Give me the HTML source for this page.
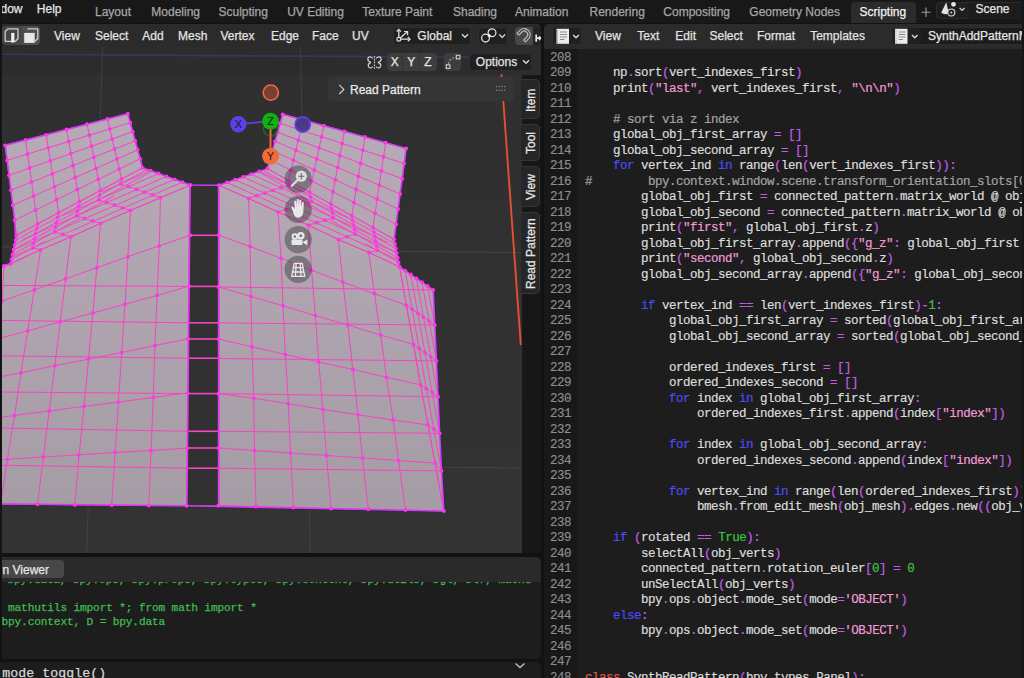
<!DOCTYPE html>
<html><head><meta charset="utf-8">
<style>
*{margin:0;padding:0;box-sizing:border-box}
html,body{width:1024px;height:678px;overflow:hidden;background:#121212;font-family:"Liberation Sans",sans-serif;font-size:12px}
.a{position:absolute;white-space:pre;line-height:12px;-webkit-text-stroke:0.25px currentColor}
.p{position:absolute}
#top{position:absolute;left:0;top:0;width:1024px;height:22.5px;background:#181818}
.tab{color:#a6a6a6}
.menu{color:#e6e6e6}
.hm{position:absolute;white-space:pre;line-height:12px;color:#e3e3e3;top:29.5px;-webkit-text-stroke:0.25px currentColor}
#vp{position:absolute;left:0;top:23.5px;width:541px;height:529.5px;background:linear-gradient(#2f2f2f,#333333);border-radius:0 5px 5px 0;overflow:hidden}
.btn{position:absolute;background:#3f3f3f;border-radius:4px}
.dd{position:absolute;background:#202020;border-radius:4px;border:1px solid #2e2e2e}
.stab{position:absolute;left:521px;width:19px;background:#262626;border-radius:0 5px 5px 0;border:1px solid #363636;border-left:none}
.vt{position:absolute;color:#e6e6e6;transform:rotate(-90deg);transform-origin:0 0;white-space:pre;line-height:12px;-webkit-text-stroke:0.25px currentColor}
#te{position:absolute;left:544px;top:23.5px;width:480px;height:655px;background:#1d1d1d;border-radius:5px 5px 0 0;overflow:hidden}
#teh{position:absolute;left:0;top:0;width:478px;height:25px;background:#2b2b2b}
#gut{position:absolute;left:0;top:25px;width:33.6px;height:630px;background:#181818}
.ln{position:absolute;left:0;width:27px;text-align:right;font-family:"Liberation Mono",monospace;font-size:12.5px;letter-spacing:-0.5px;line-height:15.5px;color:#8e8e8e;white-space:pre;-webkit-text-stroke:0.15px currentColor}
.cl{position:absolute;left:41px;font-family:"Liberation Mono",monospace;font-size:12.5px;letter-spacing:-0.5px;line-height:15.5px;color:#dcdcdc;white-space:pre;-webkit-text-stroke:0.2px currentColor}
#con{position:absolute;left:0;top:557px;width:541px;height:102px;background:#1d1d1d;border-radius:0 5px 5px 0;overflow:hidden}
.cg{position:absolute;font-family:"Liberation Mono",monospace;font-size:11.2px;letter-spacing:-0.17px;line-height:14px;color:#3fbd52;white-space:pre;-webkit-text-stroke:0.25px currentColor}
#info{position:absolute;left:0;top:662px;width:541px;height:16px;background:#1d1d1d;border-radius:0 5px 0 0;overflow:hidden}
</style></head><body>
<div id="top">
  <div class="a menu" style="left:0.5px;top:3.1px">dow</div>
  <div class="a menu" style="left:36.8px;top:3.1px">Help</div>
  <div class="a tab" style="left:95px;top:5.7px">Layout</div>
  <div class="a tab" style="left:151.3px;top:5.7px">Modeling</div>
  <div class="a tab" style="left:218.5px;top:5.7px">Sculpting</div>
  <div class="a tab" style="left:287.2px;top:5.7px">UV Editing</div>
  <div class="a tab" style="left:362.3px;top:5.7px">Texture Paint</div>
  <div class="a tab" style="left:453px;top:5.7px">Shading</div>
  <div class="a tab" style="left:515px;top:5.7px">Animation</div>
  <div class="a tab" style="left:589.5px;top:5.7px">Rendering</div>
  <div class="a tab" style="left:663.3px;top:5.7px">Compositing</div>
  <div class="a tab" style="left:749.3px;top:5.7px">Geometry Nodes</div>
  <div class="p" style="left:851px;top:2px;width:65px;height:20.5px;background:#2b2b2b;border-radius:4px 4px 0 0"></div>
  <div class="a" style="left:859.5px;top:5.7px;color:#f2f2f2">Scripting</div>
  <svg class="p" style="left:920px;top:6px" width="12" height="12"><path d="M6 1.5V11M1.5 6.3H10.5" stroke="#a0a0a0" stroke-width="1.1"/></svg>
  <div class="p" style="left:936.4px;top:2px;width:90px;height:17px;background:#1f1f1f;border-radius:4px;border:1px solid #2c2c2c"></div>
  <div class="p" style="left:968.5px;top:3px;width:56px;height:15.5px;background:#1c1c1c"></div>
  <div class="a menu" style="left:975.5px;top:3px">Scene</div>
  <svg class="p" style="left:936px;top:0px" width="32" height="20">
    <path d="M10.3 2.3 L5.2 12.6 C7 14.3 10 14.6 12.8 13.6 Z" fill="#e2e2e2"/>
    <circle cx="17.5" cy="4.3" r="2.4" fill="#e8e8e8"/>
    <circle cx="15.3" cy="12.5" r="3.5" fill="#222" stroke="#d6d6d6" stroke-width="1.2"/>
    <circle cx="15.3" cy="12.5" r="1" fill="#cfcfcf"/>
    <path d="M23.6 7.9 L26.1 10.4 L28.6 7.9" fill="none" stroke="#d8d8d8" stroke-width="1.3"/>
  </svg>
</div>

<div id="vp"></div>
<svg class="p" width="541" height="553" viewBox="0 0 541 553" style="left:0;top:0">
<defs><linearGradient id="fg" x1="0" y1="0" x2="0" y2="1"><stop offset="0" stop-color="#b6abb6"/><stop offset="1" stop-color="#a69ca6"/></linearGradient><clipPath id="vc"><rect x="2" y="47" width="521" height="506"/></clipPath></defs>
<g clip-path="url(#vc)">
<line x1="102.6" y1="47" x2="86.7" y2="553" stroke="#434343" stroke-width="1"/>
<line x1="300.5" y1="47" x2="310.3" y2="553" stroke="#434343" stroke-width="1"/>
<line x1="0" y1="246.8" x2="521" y2="252.6" stroke="#434343" stroke-width="1"/>
<line x1="0" y1="463" x2="521" y2="468" stroke="#434343" stroke-width="1"/>
<line x1="0" y1="54.3" x2="541" y2="57.6" stroke="#44366c" stroke-width="1.6"/>
<line x1="501.4" y1="74.3" x2="520.8" y2="345" stroke="#e4502f" stroke-width="1.9"/>
<polygon points="5.2,145.3 127.9,113.7 130.3,122.7 132.8,131.7 135.2,140.8 137.7,149.8 140.2,158.8 142.6,167.8 150.6,170.7 158.5,173.5 166.5,176.4 174.5,179.3 182.4,182.1 190.4,185.0 218.9,185.2 218.9,185.2 227.0,182.4 235.0,179.7 243.1,176.9 251.2,174.1 259.2,171.4 267.3,168.6 269.9,159.6 272.4,150.5 275.0,141.4 277.6,132.4 280.1,123.3 282.7,114.3 406.2,148.4 404.2,163.6 402.2,178.7 400.1,193.9 398.1,209.0 396.1,224.2 394.1,239.3 395.0,243.9 395.9,248.5 396.8,253.1 397.7,257.7 398.6,262.3 399.5,266.9 405.2,270.6 410.8,274.5 416.4,278.4 422.0,282.2 427.6,286.0 433.2,289.9 434.8,325.0 436.5,360.9 438.1,396.7 439.7,433.3 441.5,470.9 443.9,511.1 186.5,505.8 0.5,504.0 -2.0,504.0 -2.0,266.0 10.6,264.0 11.6,259.2 12.6,254.4 13.6,249.6 14.6,244.8 15.6,240.0 14.7,220.2 12.8,205.2 10.9,190.2 9.0,175.3 7.1,160.3" fill="#2a2a5a" stroke="#2a2a5a" stroke-width="2.6" stroke-linejoin="round"/>
<polygon points="5.2,145.3 127.9,113.7 130.3,122.7 132.8,131.7 135.2,140.8 137.7,149.8 140.2,158.8 142.6,167.8 150.6,170.7 158.5,173.5 166.5,176.4 174.5,179.3 182.4,182.1 190.4,185.0 218.9,185.2 218.9,185.2 227.0,182.4 235.0,179.7 243.1,176.9 251.2,174.1 259.2,171.4 267.3,168.6 269.9,159.6 272.4,150.5 275.0,141.4 277.6,132.4 280.1,123.3 282.7,114.3 406.2,148.4 404.2,163.6 402.2,178.7 400.1,193.9 398.1,209.0 396.1,224.2 394.1,239.3 395.0,243.9 395.9,248.5 396.8,253.1 397.7,257.7 398.6,262.3 399.5,266.9 405.2,270.6 410.8,274.5 416.4,278.4 422.0,282.2 427.6,286.0 433.2,289.9 434.8,325.0 436.5,360.9 438.1,396.7 439.7,433.3 441.5,470.9 443.9,511.1 186.5,505.8 0.5,504.0 -2.0,504.0 -2.0,266.0 10.6,264.0 11.6,259.2 12.6,254.4 13.6,249.6 14.6,244.8 15.6,240.0 14.7,220.2 12.8,205.2 10.9,190.2 9.0,175.3 7.1,160.3" fill="url(#fg)"/>
<polygon points="190.5,185 218.5,185.2 218.5,505.5 186.5,505.8" fill="#313131"/>
<line x1="189" y1="235.3" x2="219" y2="235.3" stroke="#f644c2" stroke-width="1.6"/>
<line x1="189" y1="286.4" x2="219" y2="286.4" stroke="#f644c2" stroke-width="1.6"/>
<line x1="189" y1="322.8" x2="219" y2="322.8" stroke="#f644c2" stroke-width="1.6"/>
<line x1="189" y1="339" x2="219" y2="339" stroke="#f644c2" stroke-width="1.6"/>
<line x1="189" y1="358.2" x2="219" y2="358.2" stroke="#f644c2" stroke-width="1.6"/>
<line x1="189" y1="393.6" x2="219" y2="393.6" stroke="#f644c2" stroke-width="1.6"/>
<line x1="189" y1="431.3" x2="219" y2="431.3" stroke="#f644c2" stroke-width="1.6"/>
<line x1="189" y1="448" x2="219" y2="448" stroke="#f644c2" stroke-width="1.6"/>
<line x1="189" y1="468.2" x2="219" y2="468.2" stroke="#f644c2" stroke-width="1.6"/>
<g fill="none" stroke="#f644c2" stroke-width="1" stroke-linejoin="round">
<polyline points="5.2,145.3 25.6,140.0 46.1,134.8 66.5,129.5 87.0,124.2 107.5,119.0 127.9,113.7"/>
<polyline points="7.1,160.3 27.6,154.0 48.2,147.8 68.7,141.5 89.3,135.2 109.8,129.0 130.3,122.7"/>
<polyline points="9.0,175.3 29.6,168.0 50.3,160.8 70.9,153.5 91.5,146.2 112.2,139.0 132.8,131.7"/>
<polyline points="10.9,190.2 31.6,182.0 52.4,173.8 73.1,165.5 93.8,157.2 114.5,149.0 135.2,140.8"/>
<polyline points="12.8,205.2 33.6,196.0 54.4,186.7 75.2,177.5 96.1,168.3 116.9,159.0 137.7,149.8"/>
<polyline points="14.7,220.2 35.6,210.0 56.5,199.7 77.4,189.5 98.3,179.3 119.2,169.0 140.2,158.8"/>
<polyline points="16.6,235.2 37.6,224.0 58.6,212.7 79.6,201.5 100.6,190.3 121.6,179.0 142.6,167.8"/>
<polyline points="5.2,145.3 7.1,160.3 9.0,175.3 10.9,190.2 12.8,205.2 14.7,220.2 16.6,235.2"/>
<polyline points="25.6,140.0 27.6,154.0 29.6,168.0 31.6,182.0 33.6,196.0 35.6,210.0 37.6,224.0"/>
<polyline points="46.1,134.8 48.2,147.8 50.3,160.8 52.4,173.8 54.4,186.7 56.5,199.7 58.6,212.7"/>
<polyline points="66.5,129.5 68.7,141.5 70.9,153.5 73.1,165.5 75.2,177.5 77.4,189.5 79.6,201.5"/>
<polyline points="87.0,124.2 89.3,135.2 91.5,146.2 93.8,157.2 96.1,168.3 98.3,179.3 100.6,190.3"/>
<polyline points="107.5,119.0 109.8,129.0 112.2,139.0 114.5,149.0 116.9,159.0 119.2,169.0 121.6,179.0"/>
<polyline points="127.9,113.7 130.3,122.7 132.8,131.7 135.2,140.8 137.7,149.8 140.2,158.8 142.6,167.8"/>
<polyline points="282.7,114.3 303.3,120.0 323.9,125.7 344.4,131.3 365.0,137.0 385.6,142.7 406.2,148.4"/>
<polyline points="280.1,123.3 300.8,130.1 321.5,136.8 342.2,143.4 362.8,150.2 383.5,156.8 404.2,163.6"/>
<polyline points="277.6,132.4 298.3,140.1 319.1,147.8 339.9,155.5 360.6,163.3 381.4,171.0 402.2,178.7"/>
<polyline points="275.0,141.4 295.9,150.2 316.7,158.9 337.6,167.6 358.4,176.4 379.3,185.1 400.1,193.9"/>
<polyline points="272.4,150.5 293.4,160.2 314.3,170.0 335.3,179.8 356.2,189.5 377.2,199.2 398.1,209.0"/>
<polyline points="269.9,159.6 290.9,170.3 311.9,181.1 333.0,191.8 354.0,202.6 375.1,213.4 396.1,224.2"/>
<polyline points="267.3,168.6 288.4,180.4 309.6,192.2 330.7,203.9 351.8,215.7 373.0,227.5 394.1,239.3"/>
<polyline points="282.7,114.3 280.1,123.3 277.6,132.4 275.0,141.4 272.4,150.5 269.9,159.6 267.3,168.6"/>
<polyline points="303.3,120.0 300.8,130.1 298.3,140.1 295.9,150.2 293.4,160.2 290.9,170.3 288.4,180.4"/>
<polyline points="323.9,125.7 321.5,136.8 319.1,147.8 316.7,158.9 314.3,170.0 311.9,181.1 309.6,192.2"/>
<polyline points="344.4,131.3 342.2,143.4 339.9,155.5 337.6,167.6 335.3,179.8 333.0,191.8 330.7,203.9"/>
<polyline points="365.0,137.0 362.8,150.2 360.6,163.3 358.4,176.4 356.2,189.5 354.0,202.6 351.8,215.7"/>
<polyline points="385.6,142.7 383.5,156.8 381.4,171.0 379.3,185.1 377.2,199.2 375.1,213.4 373.0,227.5"/>
<polyline points="406.2,148.4 404.2,163.6 402.2,178.7 400.1,193.9 398.1,209.0 396.1,224.2 394.1,239.3"/>
<polyline points="16.6,235.2 15.6,240.0 14.6,244.8 13.6,249.6 12.6,254.4 11.6,259.2 10.6,264.0"/>
<polyline points="37.6,224.0 36.6,228.8 35.6,233.6 34.6,238.4 33.6,243.2 32.6,248.0 40.6,249.8"/>
<polyline points="58.6,212.7 57.6,217.5 56.6,222.3 55.6,227.1 54.6,231.9 62.8,234.4 70.9,236.8"/>
<polyline points="79.6,201.5 78.6,206.3 77.6,211.1 76.6,215.9 84.6,218.4 92.6,221.0 100.6,223.5"/>
<polyline points="100.6,190.3 99.6,195.1 98.6,199.9 106.6,202.5 114.5,205.1 122.5,207.8 130.5,210.4"/>
<polyline points="121.6,179.0 120.6,183.8 128.6,186.6 136.6,189.4 144.5,192.2 152.5,194.9 160.5,197.7"/>
<polyline points="142.6,167.8 150.6,170.7 158.5,173.5 166.5,176.4 174.5,179.3 182.4,182.1 190.4,185.0"/>
<polyline points="267.3,168.6 259.2,171.4 251.2,174.1 243.1,176.9 235.0,179.7 227.0,182.4 218.9,185.2"/>
<polyline points="288.4,180.4 289.3,185.0 281.2,187.7 273.0,190.3 264.9,193.0 256.7,195.7 248.6,198.4"/>
<polyline points="309.6,192.2 310.5,196.8 311.4,201.4 303.1,204.0 294.7,206.7 286.4,209.4 278.1,212.1"/>
<polyline points="330.7,203.9 331.6,208.5 332.5,213.1 333.4,217.8 325.1,220.2 316.7,222.7 308.4,225.2"/>
<polyline points="351.8,215.7 352.7,220.3 353.6,224.9 354.5,229.5 355.4,234.1 346.9,236.8 338.4,239.5"/>
<polyline points="373.0,227.5 373.9,232.1 374.8,236.7 375.7,241.3 376.6,245.9 377.5,250.5 368.9,252.5"/>
<polyline points="394.1,239.3 395.0,243.9 395.9,248.5 396.8,253.1 397.7,257.7 398.6,262.3 399.5,266.9"/>
<polyline points="16.6,235.2 37.6,224.0 58.6,212.7 79.6,201.5 100.6,190.3 121.6,179.0 142.6,167.8"/>
<polyline points="10.6,264.0 40.6,249.8 70.9,236.8 100.6,223.5 130.5,210.4 160.5,197.7 190.4,185.0"/>
<polyline points="267.3,168.6 288.4,180.4 309.6,192.2 330.7,203.9 351.8,215.7 373.0,227.5 394.1,239.3"/>
<polyline points="218.9,185.2 248.6,198.4 278.1,212.1 308.4,225.2 338.4,239.5 368.9,252.5 399.5,266.9"/>
<polyline points="190.4,185.0 160.5,197.7 130.5,210.4 100.6,223.5 70.9,236.8 40.6,249.8 3.9,266.4"/>
<polyline points="190.4,235.2 159.2,245.9 127.9,256.6 96.9,267.7 65.7,278.8 34.3,289.8 2.2,300.9"/>
<polyline points="189.2,286.1 157.1,295.4 125.0,304.2 92.9,313.0 60.2,321.9 27.7,330.8 -5.0,339.5"/>
<polyline points="188.0,338.9 154.9,345.6 121.7,352.4 88.5,359.1 54.9,365.7 21.0,372.8 -12.0,379.0"/>
<polyline points="187.5,392.9 153.3,397.4 118.4,402.1 84.0,406.4 49.2,410.9 14.6,415.4 -20.0,420.0"/>
<polyline points="187.1,448.2 151.0,450.5 115.2,452.5 79.1,454.8 43.4,457.0 7.4,459.3 -28.0,461.5"/>
<polyline points="186.5,505.8 148.8,505.6 111.7,505.2 74.8,504.8 37.5,504.3 0.5,504.0 -36.0,504.0"/>
<polyline points="160.5,197.7 159.2,245.9 157.1,295.4 154.9,345.6 153.3,397.4 151.0,450.5 148.8,505.6"/>
<polyline points="130.5,210.4 127.9,256.6 125.0,304.2 121.7,352.4 118.4,402.1 115.2,452.5 111.7,505.2"/>
<polyline points="100.6,223.5 96.9,267.7 92.9,313.0 88.5,359.1 84.0,406.4 79.1,454.8 74.8,504.8"/>
<polyline points="70.9,236.8 65.7,278.8 60.2,321.9 54.9,365.7 49.2,410.9 43.4,457.0 37.5,504.3"/>
<polyline points="40.6,249.8 34.3,289.8 27.7,330.8 21.0,372.8 14.6,415.4 7.4,459.3 0.5,504.0"/>
<polyline points="3.9,266.4 2.2,300.9 -5.0,339.5 -12.0,379.0 -20.0,420.0 -28.0,461.5 -36.0,504.0"/>
<polyline points="218.9,185.2 248.6,198.4 278.1,212.1 308.4,225.2 338.4,239.5 368.9,252.5 399.6,266.8"/>
<polyline points="218.8,235.2 250.1,246.5 281.0,258.3 311.6,270.3 342.9,282.1 374.4,293.6 406.4,305.3"/>
<polyline points="218.5,287.0 250.9,296.4 283.0,305.8 315.3,315.6 347.9,325.0 380.7,335.1 413.5,344.4"/>
<polyline points="218.5,339.1 252.0,346.8 285.3,354.5 318.8,362.0 352.8,369.5 386.5,377.3 420.6,384.8"/>
<polyline points="218.5,393.7 253.7,398.3 288.4,403.7 322.8,409.4 358.0,414.8 393.1,419.9 428.0,425.0"/>
<polyline points="218.5,448.0 254.5,450.5 290.5,453.0 326.5,455.5 362.5,458.0 398.5,460.5 435.0,463.0"/>
<polyline points="218.5,505.5 256.0,506.5 293.5,507.5 331.0,508.5 368.3,509.2 405.5,510.0 443.9,511.1"/>
<polyline points="248.6,198.4 250.1,246.5 250.9,296.4 252.0,346.8 253.7,398.3 254.5,450.5 256.0,506.5"/>
<polyline points="278.1,212.1 281.0,258.3 283.0,305.8 285.3,354.5 288.4,403.7 290.5,453.0 293.5,507.5"/>
<polyline points="308.4,225.2 311.6,270.3 315.3,315.6 318.8,362.0 322.8,409.4 326.5,455.5 331.0,508.5"/>
<polyline points="338.4,239.5 342.9,282.1 347.9,325.0 352.8,369.5 358.0,414.8 362.5,458.0 368.3,509.2"/>
<polyline points="368.9,252.5 374.4,293.6 380.7,335.1 386.5,377.3 393.1,419.9 398.5,460.5 405.5,510.0"/>
<polyline points="399.6,266.8 406.4,305.3 413.5,344.4 420.6,384.8 428.0,425.0 435.0,463.0 443.9,511.1"/>
<polyline points="399.6,266.8 405.2,270.6 410.8,274.5 416.4,278.4 422.0,282.2 427.6,286.0 433.2,289.9"/>
<polyline points="406.4,305.3 412.1,309.2 417.8,313.2 423.4,317.1 429.1,321.1 434.8,325.0"/>
<polyline points="413.5,344.4 419.2,348.5 425.0,352.6 430.8,356.8 436.5,360.9"/>
<polyline points="420.6,384.8 426.4,388.8 432.3,392.7 438.1,396.7"/>
<polyline points="428.0,425.0 433.9,429.1 439.7,433.3"/>
<polyline points="435.0,463.0 441.5,470.9"/>
<polyline points="399.6,266.8 406.4,305.3 413.5,344.4 420.6,384.8 428.0,425.0 435.0,463.0 443.9,511.1"/>
<polyline points="405.2,270.6 412.1,309.2 419.2,348.5 426.4,388.8 433.9,429.1 441.5,470.9"/>
<polyline points="410.8,274.5 417.8,313.2 425.0,352.6 432.3,392.7 439.7,433.3"/>
<polyline points="416.4,278.4 423.4,317.1 430.8,356.8 438.1,396.7"/>
<polyline points="422.0,282.2 429.1,321.1 436.5,360.9"/>
<polyline points="427.6,286.0 434.8,325.0"/>
<polyline points="433.2,289.9"/>
<polyline points="190.0,286.4 -2.0,285.4"/>
<polyline points="190.0,322.8 -2.0,320.4"/>
<polyline points="190.0,358.2 -2.0,355.8"/>
<polyline points="190.0,393.6 -2.0,392.0"/>
<polyline points="190.0,431.3 -2.0,428.0"/>
<polyline points="190.0,468.2 -2.0,465.2"/>
<polyline points="218.5,287.0 433.2,289.9"/>
<polyline points="218.5,322.9 434.8,325.0"/>
<polyline points="218.5,358.5 436.5,360.9"/>
<polyline points="218.5,393.7 438.1,396.7"/>
<polyline points="218.5,431.3 439.7,433.3"/>
<polyline points="218.5,468.2 441.5,470.9"/>
</g>
<clipPath id="lfc"><polygon points="16.6,235.2 37.6,224.0 58.6,212.7 79.6,201.5 100.6,190.3 121.6,179.0 142.6,167.8 150.6,170.7 158.5,173.5 166.5,176.4 174.5,179.3 182.4,182.1 190.4,185.0 190.4,185.0 160.5,197.7 130.5,210.4 100.6,223.5 70.9,236.8 40.6,249.8 10.6,264.0 11.6,259.2 12.6,254.4 13.6,249.6 14.6,244.8 15.6,240.0"/></clipPath><clipPath id="rfc"><polygon points="267.3,168.6 288.4,180.4 309.6,192.2 330.7,203.9 351.8,215.7 373.0,227.5 394.1,239.3 395.0,243.9 395.9,248.5 396.8,253.1 397.7,257.7 398.6,262.3 399.5,266.9 399.5,266.9 368.9,252.5 338.4,239.5 308.4,225.2 278.1,212.1 248.6,198.4 218.9,185.2 227.0,182.4 235.0,179.7 243.1,176.9 251.2,174.1 259.2,171.4"/></clipPath>
<g fill="none" stroke="#f644c2" stroke-width="1" clip-path="url(#lfc)">
<polyline points="-47.4,273.7 183.6,150.1"/>
<polyline points="102.6,191.7 168.5,162.8"/>
<polyline points="-35.8,271.8 149.0,172.9"/>
<polyline points="62.6,215.7 194.5,157.7"/>
<polyline points="-24.2,269.8 114.4,195.7"/>
<polyline points="22.7,239.6 220.4,152.7"/>
<polyline points="-12.6,267.9 79.8,218.5"/>
<polyline points="-17.3,263.5 246.4,147.7"/>
<polyline points="-1.0,265.9 45.2,241.2"/>
<polyline points="-57.3,287.5 272.3,142.6"/>
</g>
<g fill="none" stroke="#f644c2" stroke-width="1" clip-path="url(#rfc)">
<polyline points="225.9,149.6 458.4,279.2"/>
<polyline points="241.2,163.2 307.4,193.2"/>
<polyline points="260.6,173.1 446.6,276.8"/>
<polyline points="215.0,157.8 347.5,217.7"/>
<polyline points="295.4,196.5 434.8,274.3"/>
<polyline points="188.9,152.4 387.6,242.3"/>
<polyline points="330.1,220.0 423.1,271.8"/>
<polyline points="162.8,147.0 427.7,266.8"/>
<polyline points="364.8,243.4 411.3,269.4"/>
<polyline points="136.7,141.6 467.8,291.4"/>
</g>
<polygon points="5.2,145.3 127.9,113.7 130.3,122.7 132.8,131.7 135.2,140.8 137.7,149.8 140.2,158.8 142.6,167.8 150.6,170.7 158.5,173.5 166.5,176.4 174.5,179.3 182.4,182.1 190.4,185.0 218.9,185.2 218.9,185.2 227.0,182.4 235.0,179.7 243.1,176.9 251.2,174.1 259.2,171.4 267.3,168.6 269.9,159.6 272.4,150.5 275.0,141.4 277.6,132.4 280.1,123.3 282.7,114.3 406.2,148.4 404.2,163.6 402.2,178.7 400.1,193.9 398.1,209.0 396.1,224.2 394.1,239.3 395.0,243.9 395.9,248.5 396.8,253.1 397.7,257.7 398.6,262.3 399.5,266.9 405.2,270.6 410.8,274.5 416.4,278.4 422.0,282.2 427.6,286.0 433.2,289.9 434.8,325.0 436.5,360.9 438.1,396.7 439.7,433.3 441.5,470.9 443.9,511.1 186.5,505.8 0.5,504.0 -2.0,504.0 -2.0,266.0 10.6,264.0 11.6,259.2 12.6,254.4 13.6,249.6 14.6,244.8 15.6,240.0 14.7,220.2 12.8,205.2 10.9,190.2 9.0,175.3 7.1,160.3" fill="none" stroke="#d838f0" stroke-width="1.5" stroke-linejoin="round"/>
<line x1="190" y1="185" x2="186.8" y2="505.8" stroke="#e038e8" stroke-width="1.8"/>
<line x1="218.7" y1="185" x2="218.7" y2="505.5" stroke="#e038e8" stroke-width="1.8"/>
<g fill="#ff36ea">
<circle cx="413.5" cy="344.4" r="1.9"/>
<circle cx="32.6" cy="248.0" r="1.9"/>
<circle cx="35.6" cy="210.0" r="1.9"/>
<circle cx="128.6" cy="186.6" r="1.9"/>
<circle cx="79.1" cy="454.8" r="1.9"/>
<circle cx="281" cy="258.3" r="1.9"/>
<circle cx="356.2" cy="189.5" r="1.9"/>
<circle cx="250.9" cy="296.4" r="1.9"/>
<circle cx="398.6" cy="262.3" r="1.9"/>
<circle cx="157.1" cy="295.4" r="1.9"/>
<circle cx="405.2" cy="270.6" r="1.9"/>
<circle cx="27.7" cy="330.8" r="1.9"/>
<circle cx="66.5" cy="129.5" r="1.9"/>
<circle cx="397.7" cy="257.7" r="1.9"/>
<circle cx="398.1" cy="209.0" r="1.9"/>
<circle cx="-28" cy="461.5" r="1.9"/>
<circle cx="315.3" cy="315.6" r="1.9"/>
<circle cx="218.5" cy="339.1" r="1.9"/>
<circle cx="0.5" cy="504" r="1.9"/>
<circle cx="420.6" cy="384.8" r="1.9"/>
<circle cx="323.9" cy="125.7" r="1.9"/>
<circle cx="11.6" cy="259.2" r="1.9"/>
<circle cx="15.6" cy="240.0" r="1.9"/>
<circle cx="218.9" cy="185.2" r="1.9"/>
<circle cx="58.6" cy="212.7" r="1.9"/>
<circle cx="253.7" cy="398.3" r="1.9"/>
<circle cx="13.6" cy="249.6" r="1.9"/>
<circle cx="33.6" cy="196.0" r="1.9"/>
<circle cx="400.1" cy="193.9" r="1.9"/>
<circle cx="309.6" cy="192.2" r="1.9"/>
<circle cx="316.7" cy="222.7" r="1.9"/>
<circle cx="87.0" cy="124.2" r="1.9"/>
<circle cx="55.6" cy="227.1" r="1.9"/>
<circle cx="40.6" cy="249.8" r="1.9"/>
<circle cx="254.5" cy="450.5" r="1.9"/>
<circle cx="423.4" cy="317.1" r="1.9"/>
<circle cx="375.7" cy="241.3" r="1.9"/>
<circle cx="429.1" cy="321.1" r="1.9"/>
<circle cx="5.2" cy="145.3" r="1.9"/>
<circle cx="289.3" cy="185.0" r="1.9"/>
<circle cx="412.1" cy="309.2" r="1.9"/>
<circle cx="151" cy="450.5" r="1.9"/>
<circle cx="49.2" cy="410.9" r="1.9"/>
<circle cx="374.4" cy="293.6" r="1.9"/>
<circle cx="417.8" cy="313.2" r="1.9"/>
<circle cx="35.6" cy="233.6" r="1.9"/>
<circle cx="373.0" cy="227.5" r="1.9"/>
<circle cx="344.4" cy="131.3" r="1.9"/>
<circle cx="10.6" cy="264.0" r="1.9"/>
<circle cx="286.4" cy="209.4" r="1.9"/>
<circle cx="398.5" cy="460.5" r="1.9"/>
<circle cx="153.3" cy="397.4" r="1.9"/>
<circle cx="399.5" cy="266.9" r="1.9"/>
<circle cx="331" cy="508.5" r="1.9"/>
<circle cx="12.6" cy="254.4" r="1.9"/>
<circle cx="125" cy="304.2" r="1.9"/>
<circle cx="16.6" cy="235.2" r="1.9"/>
<circle cx="362.5" cy="458" r="1.9"/>
<circle cx="120.6" cy="183.8" r="1.9"/>
<circle cx="7.4" cy="459.3" r="1.9"/>
<circle cx="48.2" cy="147.8" r="1.9"/>
<circle cx="119.2" cy="169.0" r="1.9"/>
<circle cx="136.6" cy="189.4" r="1.9"/>
<circle cx="277.6" cy="132.4" r="1.9"/>
<circle cx="34.6" cy="238.4" r="1.9"/>
<circle cx="218.5" cy="393.7" r="1.9"/>
<circle cx="428" cy="425" r="1.9"/>
<circle cx="380.7" cy="335.1" r="1.9"/>
<circle cx="158.5" cy="173.5" r="1.9"/>
<circle cx="311.4" cy="201.4" r="1.9"/>
<circle cx="37.5" cy="504.3" r="1.9"/>
<circle cx="96.1" cy="168.3" r="1.9"/>
<circle cx="56.6" cy="222.3" r="1.9"/>
<circle cx="84.6" cy="218.4" r="1.9"/>
<circle cx="293.5" cy="507.5" r="1.9"/>
<circle cx="377.5" cy="250.5" r="1.9"/>
<circle cx="79.6" cy="201.5" r="1.9"/>
<circle cx="335.3" cy="179.8" r="1.9"/>
<circle cx="98.3" cy="179.3" r="1.9"/>
<circle cx="342.2" cy="143.4" r="1.9"/>
<circle cx="290.9" cy="170.3" r="1.9"/>
<circle cx="130.5" cy="210.4" r="1.9"/>
<circle cx="432.3" cy="392.7" r="1.9"/>
<circle cx="218.5" cy="287" r="1.9"/>
<circle cx="93.8" cy="157.2" r="1.9"/>
<circle cx="375.1" cy="213.4" r="1.9"/>
<circle cx="325.1" cy="220.2" r="1.9"/>
<circle cx="298.3" cy="140.1" r="1.9"/>
<circle cx="106.6" cy="202.5" r="1.9"/>
<circle cx="14.6" cy="415.4" r="1.9"/>
<circle cx="293.4" cy="160.2" r="1.9"/>
<circle cx="395.0" cy="243.9" r="1.9"/>
<circle cx="427.6" cy="286.0" r="1.9"/>
<circle cx="188" cy="338.9" r="1.9"/>
<circle cx="339.9" cy="155.5" r="1.9"/>
<circle cx="78.6" cy="206.3" r="1.9"/>
<circle cx="406.2" cy="148.4" r="1.9"/>
<circle cx="144.5" cy="192.2" r="1.9"/>
<circle cx="300.8" cy="130.1" r="1.9"/>
<circle cx="377.2" cy="199.2" r="1.9"/>
<circle cx="114.5" cy="205.1" r="1.9"/>
<circle cx="439.7" cy="433.3" r="1.9"/>
<circle cx="303.3" cy="120.0" r="1.9"/>
<circle cx="76.6" cy="215.9" r="1.9"/>
<circle cx="393.1" cy="419.9" r="1.9"/>
<circle cx="337.6" cy="167.6" r="1.9"/>
<circle cx="396.8" cy="253.1" r="1.9"/>
<circle cx="235.0" cy="179.7" r="1.9"/>
<circle cx="154.9" cy="345.6" r="1.9"/>
<circle cx="57.6" cy="217.5" r="1.9"/>
<circle cx="331.6" cy="208.5" r="1.9"/>
<circle cx="352.7" cy="220.3" r="1.9"/>
<circle cx="60.2" cy="321.9" r="1.9"/>
<circle cx="70.9" cy="153.5" r="1.9"/>
<circle cx="360.6" cy="163.3" r="1.9"/>
<circle cx="251.2" cy="174.1" r="1.9"/>
<circle cx="373.9" cy="232.1" r="1.9"/>
<circle cx="116.9" cy="159.0" r="1.9"/>
<circle cx="-36" cy="504" r="1.9"/>
<circle cx="272.4" cy="150.5" r="1.9"/>
<circle cx="354.0" cy="202.6" r="1.9"/>
<circle cx="88.5" cy="359.1" r="1.9"/>
<circle cx="-5" cy="339.5" r="1.9"/>
<circle cx="190.4" cy="185.0" r="1.9"/>
<circle cx="187.5" cy="392.9" r="1.9"/>
<circle cx="332.5" cy="213.1" r="1.9"/>
<circle cx="285.3" cy="354.5" r="1.9"/>
<circle cx="358.4" cy="176.4" r="1.9"/>
<circle cx="31.6" cy="182.0" r="1.9"/>
<circle cx="269.9" cy="159.6" r="1.9"/>
<circle cx="314.3" cy="170.0" r="1.9"/>
<circle cx="402.2" cy="178.7" r="1.9"/>
<circle cx="281.2" cy="187.7" r="1.9"/>
<circle cx="14.6" cy="244.8" r="1.9"/>
<circle cx="77.4" cy="189.5" r="1.9"/>
<circle cx="264.9" cy="193.0" r="1.9"/>
<circle cx="7.1" cy="160.3" r="1.9"/>
<circle cx="115.2" cy="452.5" r="1.9"/>
<circle cx="166.5" cy="176.4" r="1.9"/>
<circle cx="410.8" cy="274.5" r="1.9"/>
<circle cx="127.9" cy="256.6" r="1.9"/>
<circle cx="189.2" cy="286.1" r="1.9"/>
<circle cx="422.0" cy="282.2" r="1.9"/>
<circle cx="278.1" cy="212.1" r="1.9"/>
<circle cx="99.6" cy="195.1" r="1.9"/>
<circle cx="92.9" cy="313" r="1.9"/>
<circle cx="36.6" cy="228.8" r="1.9"/>
<circle cx="130.3" cy="122.7" r="1.9"/>
<circle cx="54.6" cy="231.9" r="1.9"/>
<circle cx="353.6" cy="224.9" r="1.9"/>
<circle cx="436.5" cy="360.9" r="1.9"/>
<circle cx="142.6" cy="167.8" r="1.9"/>
<circle cx="121.6" cy="179.0" r="1.9"/>
<circle cx="425.0" cy="352.6" r="1.9"/>
<circle cx="3.9" cy="266.4" r="1.9"/>
<circle cx="275.0" cy="141.4" r="1.9"/>
<circle cx="438.1" cy="396.7" r="1.9"/>
<circle cx="62.8" cy="234.4" r="1.9"/>
<circle cx="12.8" cy="205.2" r="1.9"/>
<circle cx="29.6" cy="168.0" r="1.9"/>
<circle cx="10.9" cy="190.2" r="1.9"/>
<circle cx="100.6" cy="223.5" r="1.9"/>
<circle cx="399.6" cy="266.8" r="1.9"/>
<circle cx="426.4" cy="388.8" r="1.9"/>
<circle cx="37.6" cy="224.0" r="1.9"/>
<circle cx="342.9" cy="282.1" r="1.9"/>
<circle cx="368.9" cy="252.5" r="1.9"/>
<circle cx="381.4" cy="171.0" r="1.9"/>
<circle cx="89.3" cy="135.2" r="1.9"/>
<circle cx="150.6" cy="170.7" r="1.9"/>
<circle cx="338.4" cy="239.5" r="1.9"/>
<circle cx="333.4" cy="217.8" r="1.9"/>
<circle cx="46.1" cy="134.8" r="1.9"/>
<circle cx="218.8" cy="235.2" r="1.9"/>
<circle cx="160.5" cy="197.7" r="1.9"/>
<circle cx="140.2" cy="158.8" r="1.9"/>
<circle cx="406.4" cy="305.3" r="1.9"/>
<circle cx="109.8" cy="129.0" r="1.9"/>
<circle cx="283" cy="305.8" r="1.9"/>
<circle cx="100.6" cy="190.3" r="1.9"/>
<circle cx="107.5" cy="119.0" r="1.9"/>
<circle cx="137.7" cy="149.8" r="1.9"/>
<circle cx="311.9" cy="181.1" r="1.9"/>
<circle cx="73.1" cy="165.5" r="1.9"/>
<circle cx="159.2" cy="245.9" r="1.9"/>
<circle cx="186.5" cy="505.8" r="1.9"/>
<circle cx="322.8" cy="409.4" r="1.9"/>
<circle cx="394.1" cy="239.3" r="1.9"/>
<circle cx="187.1" cy="448.2" r="1.9"/>
<circle cx="441.5" cy="470.9" r="1.9"/>
<circle cx="9.0" cy="175.3" r="1.9"/>
<circle cx="365.0" cy="137.0" r="1.9"/>
<circle cx="248.6" cy="198.4" r="1.9"/>
<circle cx="96.9" cy="267.7" r="1.9"/>
<circle cx="433.9" cy="429.1" r="1.9"/>
<circle cx="250.1" cy="246.5" r="1.9"/>
<circle cx="68.7" cy="141.5" r="1.9"/>
<circle cx="379.3" cy="185.1" r="1.9"/>
<circle cx="362.8" cy="150.2" r="1.9"/>
<circle cx="14.7" cy="220.2" r="1.9"/>
<circle cx="190.4" cy="235.2" r="1.9"/>
<circle cx="311.6" cy="270.3" r="1.9"/>
<circle cx="-12" cy="379" r="1.9"/>
<circle cx="319.1" cy="147.8" r="1.9"/>
<circle cx="318.8" cy="362" r="1.9"/>
<circle cx="386.5" cy="377.3" r="1.9"/>
<circle cx="347.9" cy="325" r="1.9"/>
<circle cx="288.4" cy="403.7" r="1.9"/>
<circle cx="433.2" cy="289.9" r="1.9"/>
<circle cx="70.9" cy="236.8" r="1.9"/>
<circle cx="280.1" cy="123.3" r="1.9"/>
<circle cx="419.2" cy="348.5" r="1.9"/>
<circle cx="303.1" cy="204.0" r="1.9"/>
<circle cx="34.3" cy="289.8" r="1.9"/>
<circle cx="74.8" cy="504.8" r="1.9"/>
<circle cx="54.4" cy="186.7" r="1.9"/>
<circle cx="54.9" cy="365.7" r="1.9"/>
<circle cx="290.5" cy="453" r="1.9"/>
<circle cx="50.3" cy="160.8" r="1.9"/>
<circle cx="174.5" cy="179.3" r="1.9"/>
<circle cx="-20" cy="420" r="1.9"/>
<circle cx="56.5" cy="199.7" r="1.9"/>
<circle cx="252" cy="346.8" r="1.9"/>
<circle cx="346.9" cy="236.8" r="1.9"/>
<circle cx="52.4" cy="173.8" r="1.9"/>
<circle cx="352.8" cy="369.5" r="1.9"/>
<circle cx="75.2" cy="177.5" r="1.9"/>
<circle cx="416.4" cy="278.4" r="1.9"/>
<circle cx="405.5" cy="510" r="1.9"/>
<circle cx="326.5" cy="455.5" r="1.9"/>
<circle cx="435" cy="463" r="1.9"/>
<circle cx="385.6" cy="142.7" r="1.9"/>
<circle cx="308.4" cy="225.2" r="1.9"/>
<circle cx="374.8" cy="236.7" r="1.9"/>
<circle cx="395.9" cy="248.5" r="1.9"/>
<circle cx="267.3" cy="168.6" r="1.9"/>
<circle cx="295.9" cy="150.2" r="1.9"/>
<circle cx="288.4" cy="180.4" r="1.9"/>
<circle cx="368.3" cy="509.2" r="1.9"/>
<circle cx="333.0" cy="191.8" r="1.9"/>
<circle cx="256.7" cy="195.7" r="1.9"/>
<circle cx="84" cy="406.4" r="1.9"/>
<circle cx="148.8" cy="505.6" r="1.9"/>
<circle cx="152.5" cy="194.9" r="1.9"/>
<circle cx="354.5" cy="229.5" r="1.9"/>
<circle cx="218.5" cy="448" r="1.9"/>
<circle cx="111.7" cy="505.2" r="1.9"/>
<circle cx="25.6" cy="140.0" r="1.9"/>
<circle cx="321.5" cy="136.8" r="1.9"/>
<circle cx="33.6" cy="243.2" r="1.9"/>
<circle cx="122.5" cy="207.8" r="1.9"/>
<circle cx="256" cy="506.5" r="1.9"/>
<circle cx="294.7" cy="206.7" r="1.9"/>
<circle cx="118.4" cy="402.1" r="1.9"/>
<circle cx="121.7" cy="352.4" r="1.9"/>
<circle cx="443.9" cy="511.1" r="1.9"/>
<circle cx="434.8" cy="325.0" r="1.9"/>
<circle cx="430.8" cy="356.8" r="1.9"/>
<circle cx="2.2" cy="300.9" r="1.9"/>
<circle cx="92.6" cy="221.0" r="1.9"/>
<circle cx="227.0" cy="182.4" r="1.9"/>
<circle cx="91.5" cy="146.2" r="1.9"/>
<circle cx="351.8" cy="215.7" r="1.9"/>
<circle cx="396.1" cy="224.2" r="1.9"/>
<circle cx="330.7" cy="203.9" r="1.9"/>
<circle cx="132.8" cy="131.7" r="1.9"/>
<circle cx="114.5" cy="149.0" r="1.9"/>
<circle cx="259.2" cy="171.4" r="1.9"/>
<circle cx="316.7" cy="158.9" r="1.9"/>
<circle cx="127.9" cy="113.7" r="1.9"/>
<circle cx="310.5" cy="196.8" r="1.9"/>
<circle cx="135.2" cy="140.8" r="1.9"/>
<circle cx="218.5" cy="505.5" r="1.9"/>
<circle cx="112.2" cy="139.0" r="1.9"/>
<circle cx="182.4" cy="182.1" r="1.9"/>
<circle cx="43.4" cy="457" r="1.9"/>
<circle cx="21" cy="372.8" r="1.9"/>
<circle cx="383.5" cy="156.8" r="1.9"/>
<circle cx="273.0" cy="190.3" r="1.9"/>
<circle cx="376.6" cy="245.9" r="1.9"/>
<circle cx="98.6" cy="199.9" r="1.9"/>
<circle cx="355.4" cy="234.1" r="1.9"/>
<circle cx="282.7" cy="114.3" r="1.9"/>
<circle cx="77.6" cy="211.1" r="1.9"/>
<circle cx="404.2" cy="163.6" r="1.9"/>
<circle cx="243.1" cy="176.9" r="1.9"/>
<circle cx="358" cy="414.8" r="1.9"/>
<circle cx="65.7" cy="278.8" r="1.9"/>
<circle cx="27.6" cy="154.0" r="1.9"/>
</g>
<circle cx="270.8" cy="92.6" r="7.6" fill="#7a3f33" stroke="#f06a40" stroke-width="1.6"/>
<line x1="238.3" y1="124.2" x2="270.5" y2="121.2" stroke="#5a3fe6" stroke-width="1.8"/>
<circle cx="270.5" cy="129.1" r="7" fill="none" stroke="#1f6a1f" stroke-width="1.4"/>
<line x1="270.5" y1="121.2" x2="270.5" y2="156.3" stroke="#f26a3a" stroke-width="2"/>
<circle cx="238.3" cy="124.2" r="8.2" fill="#5c40e8"/>
<circle cx="270.5" cy="121.2" r="8.4" fill="#12b012"/>
<circle cx="270.5" cy="156.3" r="8.4" fill="#f26b3b"/>
<circle cx="302.7" cy="124.5" r="7.6" fill="#4a3a84" stroke="#5c40e8" stroke-width="1.6"/>
<g font-family="Liberation Sans" font-size="11" fill="#1a1a1a" text-anchor="middle"><text x="238.3" y="128.2">X</text><text x="270.5" y="125.2">Z</text><text x="270.5" y="160.3">Y</text></g>
<circle cx="298.2" cy="179.2" r="13.6" fill="rgba(40,36,40,0.38)"/>
<circle cx="298.2" cy="209.5" r="13.6" fill="rgba(40,36,40,0.38)"/>
<circle cx="298.2" cy="239.6" r="13.6" fill="rgba(40,36,40,0.38)"/>
<circle cx="298.2" cy="269.3" r="13.6" fill="rgba(40,36,40,0.38)"/>
<g><circle cx="301.3" cy="176.2" r="5.6" fill="#dcdcdc"/><path d="M297.3 180.3 L291.8 185.8" stroke="#dcdcdc" stroke-width="2.3" stroke-linecap="round"/><path d="M301.3 173.2 V179.2 M298.3 176.2 H304.3" stroke="#6e666e" stroke-width="1.1"/></g>
<path d="M292.5 210 C291 207.5 291.2 206 292.3 206.2 C293.2 206.4 294 208 294.6 209 L294.3 201.5 C294.3 200.3 296.2 200.3 296.3 201.5 L296.6 207 L296.8 199.8 C296.9 198.6 298.7 198.6 298.8 199.8 L298.9 207 L299.3 200.6 C299.4 199.4 301.2 199.5 301.2 200.7 L301.3 207.2 L302 202.8 C302.2 201.7 303.9 201.9 303.8 203.1 L303.4 211 C303.2 215.5 301 217.5 298 217.5 C295.3 217.5 294 216 292.5 210 Z" fill="#e8e8e8"/>
<g fill="#e8e8e8"><circle cx="294.8" cy="236.5" r="3.2"/><circle cx="300.8" cy="235.8" r="3.8"/><rect x="291.5" y="239.5" width="11" height="5.5" rx="1"/><path d="M302.5 242.3 L307.3 239.5 V245.3 Z"/></g><g fill="#6f666f"><circle cx="294.8" cy="236.5" r="1.2"/><circle cx="300.8" cy="235.8" r="1.4"/></g>
<g fill="none" stroke="#e8e8e8" stroke-width="1.3"><path d="M291.7 276.3 L294.2 263.3 H302.2 L304.7 276.3 Z"/><path d="M292.5 272 H304 M293.3 267.6 H303.2 M296.2 263.3 L295.4 276.3 M300.2 263.3 L301 276.3"/></g>
</svg>
<!-- tool header overlay -->
<div class="p" style="left:0;top:47px;width:541px;height:28px;background:rgba(20,20,20,0.1)"></div>
<!-- viewport header -->
<div class="p" style="left:0;top:23.5px;width:541px;height:23.5px;background:#2b2b2b;border-radius:0 5px 0 0"></div>
<div class="p" style="left:0;top:0;width:2px;height:553px;background:#141414"></div>
<div class="btn" style="left:2px;top:26.4px;width:19.5px;height:18.4px;background:#454545;border-radius:4px 0 0 4px"></div>
<div class="btn" style="left:21.7px;top:26.4px;width:18.7px;height:18.4px;background:#4e4e4e;border-radius:0 4px 4px 0"></div>
<svg class="p" style="left:0;top:23px" width="45" height="24">
  <path d="M8.2 5.8 H18 V15.5 L15.5 18.3 H5.2 V8.6 L8.2 5.8" fill="none" stroke="#cfcfcf" stroke-width="1.3" stroke-linejoin="round"/>
  <rect x="11.2" y="9.9" width="3.2" height="9.6" fill="#f0f0f0"/>
  <path d="M27.3 5.8 H37.8 V15.5 L35 18.3" fill="none" stroke="#cfcfcf" stroke-width="1.3" stroke-linejoin="round"/>
  <rect x="24.2" y="9.9" width="10.5" height="10" fill="#e6e6e6"/>
</svg>
<div class="hm" style="left:54px">View</div>
<div class="hm" style="left:95px">Select</div>
<div class="hm" style="left:142.3px">Add</div>
<div class="hm" style="left:178px">Mesh</div>
<div class="hm" style="left:220.5px">Vertex</div>
<div class="hm" style="left:271px">Edge</div>
<div class="hm" style="left:312px">Face</div>
<div class="hm" style="left:352px">UV</div>
<div class="dd" style="left:392.9px;top:26.8px;width:78.1px;height:17.8px"></div>
<svg class="p" style="left:395px;top:26px" width="20" height="20">
  <path d="M3.8 3.8 V13.2 H14.5 M3.8 13.2 L12.3 5.8" fill="none" stroke="#e0e0e0" stroke-width="1.3"/>
  <path d="M1.6 5.6 L3.8 3.3 L6 5.6 M12.8 11 L15.1 13.2 L12.8 15.4 M9 5.5 H12.6 V9.2" fill="none" stroke="#e0e0e0" stroke-width="1.2"/>
  <circle cx="3.8" cy="13.2" r="1.9" fill="#1f1f1f" stroke="#e0e0e0" stroke-width="1.2"/>
</svg>
<div class="hm" style="left:417.3px">Global</div>
<svg class="p" style="left:460px;top:31px" width="10" height="10"><path d="M2 3.2 L5 6.2 L8 3.2" fill="none" stroke="#d8d8d8" stroke-width="1.4"/></svg>
<div class="dd" style="left:478px;top:26.8px;width:30.2px;height:17.8px"></div>
<svg class="p" style="left:479px;top:26px" width="30" height="20">
  <circle cx="6.5" cy="12.1" r="3.9" fill="none" stroke="#e0e0e0" stroke-width="1.3"/>
  <circle cx="13" cy="6.8" r="3.9" fill="none" stroke="#e0e0e0" stroke-width="1.3"/>
  <circle cx="10.2" cy="9.6" r="1.5" fill="#f0f0f0"/>
  <path d="M20.3 8.6 L23.2 11.4 L26.1 8.6" fill="none" stroke="#d8d8d8" stroke-width="1.4"/>
</svg>
<div class="btn" style="left:514.7px;top:27px;width:18.5px;height:17.7px;background:#474747;border-radius:4px 0 0 4px"></div>
<div class="p" style="left:533.2px;top:27px;width:8px;height:17.7px;background:#242424"></div>
<svg class="p" style="left:514px;top:26px" width="27" height="20">
  <path d="M2.98 7.34 L6.16 4.16 A6 6 0 0 1 14.64 12.64 L11.46 15.82 L9.62 13.98 L12.8 10.8 A3.4 3.4 0 0 0 8 6 L4.82 9.18 Z" fill="none" stroke="#bcbcbc" stroke-width="1.15" stroke-linejoin="round"/>
  <path d="M22.2 8.6 V15.8 M22.2 12.2 H27 M25.6 10.3 V14.2" stroke="#e8e8e8" stroke-width="1.7"/>
</svg>
<!-- tool header row -->
<svg class="p" style="left:366px;top:54px" width="18" height="17">
  <path d="M8.5 2 V15" stroke="#cfcfcf" stroke-width="1.1" stroke-dasharray="1.6 1.2"/>
  <path d="M7 4.5 C5 2 1.8 2.3 1.8 5 C1.8 7 3.5 8 5 8.3 C3.3 8.8 2 10 2.3 12 C2.6 14.5 5.5 14.5 7 12.5" fill="none" stroke="#cfcfcf" stroke-width="1.2"/>
  <path d="M10 4.5 C12 2 15.2 2.3 15.2 5 C15.2 7 13.5 8 12 8.3 C13.7 8.8 15 10 14.7 12 C14.4 14.5 11.5 14.5 10 12.5" fill="none" stroke="#cfcfcf" stroke-width="1.2"/>
</svg>
<div class="btn" style="left:386.8px;top:53.4px;width:50px;height:17.8px;background:#3d3d3d"></div>
<div class="p" style="left:402.3px;top:53.4px;width:1px;height:17.8px;background:#333"></div>
<div class="p" style="left:419.3px;top:53.4px;width:1px;height:17.8px;background:#333"></div>
<div class="a" style="left:390.8px;top:56.3px;color:#e8e8e8">X</div>
<div class="a" style="left:407.3px;top:56.3px;color:#e8e8e8">Y</div>
<div class="a" style="left:424.3px;top:56.3px;color:#e8e8e8">Z</div>
<div class="btn" style="left:444.2px;top:53.4px;width:17.3px;height:17.8px;background:#3d3d3d"></div>
<svg class="p" style="left:444px;top:53px" width="18" height="18">
  <path d="M4.5 11 C5 7 8 4.5 12.5 4.3" fill="none" stroke="#a0a0a0" stroke-width="1.1" stroke-dasharray="2 1.5"/>
  <rect x="2.3" y="11.8" width="3.6" height="3.6" fill="none" stroke="#d0d0d0" stroke-width="1.1"/>
  <rect x="12.3" y="2.3" width="3.6" height="3.6" fill="none" stroke="#d0d0d0" stroke-width="1.1"/>
</svg>
<div class="dd" style="left:468.7px;top:53.4px;width:63.7px;height:17.8px"></div>
<div class="a" style="left:475.8px;top:56.3px;color:#e3e3e3">Options</div>
<svg class="p" style="left:521px;top:57px" width="10" height="10"><path d="M2 3.2 L5 6.2 L8 3.2" fill="none" stroke="#d8d8d8" stroke-width="1.4"/></svg>
<!-- Read pattern panel -->
<div class="p" style="left:328.4px;top:76.7px;width:185.2px;height:24.7px;background:#353535;border-radius:4px"></div>
<svg class="p" style="left:336px;top:83px" width="12" height="13"><path d="M3.3 1.8 L7.8 6.4 L3.3 11" fill="none" stroke="#d0d0d0" stroke-width="1.2"/></svg>
<div class="a" style="left:350px;top:83.6px;color:#ececec">Read Pattern</div>
<svg class="p" style="left:494px;top:84px" width="14" height="9">
  <g fill="#8a8a8a"><circle cx="2.5" cy="2.6" r=".75"/><circle cx="5.2" cy="2.6" r=".75"/><circle cx="7.9" cy="2.6" r=".75"/><circle cx="10.6" cy="2.6" r=".75"/>
  <circle cx="2.5" cy="6.2" r=".75"/><circle cx="5.2" cy="6.2" r=".75"/><circle cx="7.9" cy="6.2" r=".75"/><circle cx="10.6" cy="6.2" r=".75"/></g>
</svg>
<!-- sidebar -->
<div class="p" style="left:521.5px;top:75px;width:19.8px;height:478px;background:#171717;border-radius:0 0 5px 0"></div>
<div class="stab" style="top:79.2px;height:40.2px"></div>
<div class="stab" style="top:123.5px;height:37.2px"></div>
<div class="stab" style="top:166px;height:40.9px"></div>
<div class="stab" style="top:212.4px;height:82.1px"></div>
<div class="vt" style="left:524.5px;top:111.5px">Item</div>
<div class="vt" style="left:524.5px;top:154.3px">Tool</div>
<div class="vt" style="left:524.5px;top:199.5px">View</div>
<div class="vt" style="left:524.5px;top:288.5px">Read Pattern</div>

<div id="te">
  <div id="teh"></div>
  <div id="gut"></div>
  <div class="ln" style="top:27.45px">208</div>
<div class="ln" style="top:42.95px">209</div>
<div class="cl" style="top:42.95px">    np<span style="color:#c25ce6">.</span>sort<span style="color:#c25ce6">(</span>vert_indexes_first<span style="color:#c25ce6">)</span></div>
<div class="ln" style="top:58.45px">210</div>
<div class="cl" style="top:58.45px">    print<span style="color:#c25ce6">(</span><span style="color:#f29ad6">&quot;last&quot;</span><span style="color:#c25ce6">,</span> vert_indexes_first<span style="color:#c25ce6">,</span> <span style="color:#f29ad6">&quot;\n\n&quot;</span><span style="color:#c25ce6">)</span></div>
<div class="ln" style="top:73.95px">211</div>
<div class="ln" style="top:89.45px">212</div>
<div class="cl" style="top:89.45px"><span style="color:#a3a3a3">    # sort via z index</span></div>
<div class="ln" style="top:104.95px">213</div>
<div class="cl" style="top:104.95px">    global_obj_first_array <span style="color:#c25ce6">=</span> <span style="color:#c25ce6">[</span><span style="color:#c25ce6">]</span></div>
<div class="ln" style="top:120.45px">214</div>
<div class="cl" style="top:120.45px">    global_obj_second_array <span style="color:#c25ce6">=</span> <span style="color:#c25ce6">[</span><span style="color:#c25ce6">]</span></div>
<div class="ln" style="top:135.95px">215</div>
<div class="cl" style="top:135.95px">    <span style="color:#4c4cf5">for</span> vertex_ind <span style="color:#4c4cf5">in</span> range<span style="color:#c25ce6">(</span>len<span style="color:#c25ce6">(</span>vert_indexes_first<span style="color:#c25ce6">)</span><span style="color:#c25ce6">)</span><span style="color:#c25ce6">:</span></div>
<div class="ln" style="top:151.45px">216</div>
<div class="cl" style="top:151.45px"><span style="color:#a3a3a3">#        bpy.context.window.scene.transform_orientation_slots[0].type</span></div>
<div class="ln" style="top:166.95px">217</div>
<div class="cl" style="top:166.95px">        global_obj_first <span style="color:#c25ce6">=</span> connected_pattern<span style="color:#c25ce6">.</span>matrix_world @ obj_verts<span style="color:#c25ce6">[</span>vert_indexes_first<span style="color:#c25ce6">]</span></div>
<div class="ln" style="top:182.45px">218</div>
<div class="cl" style="top:182.45px">        global_obj_second <span style="color:#c25ce6">=</span> connected_pattern<span style="color:#c25ce6">.</span>matrix_world @ obj_verts<span style="color:#c25ce6">[</span>vert_indexes_second<span style="color:#c25ce6">]</span></div>
<div class="ln" style="top:197.95px">219</div>
<div class="cl" style="top:197.95px">        print<span style="color:#c25ce6">(</span><span style="color:#f29ad6">&quot;first&quot;</span><span style="color:#c25ce6">,</span> global_obj_first<span style="color:#c25ce6">.</span>z<span style="color:#c25ce6">)</span></div>
<div class="ln" style="top:213.45px">220</div>
<div class="cl" style="top:213.45px">        global_obj_first_array<span style="color:#c25ce6">.</span>append<span style="color:#c25ce6">(</span><span style="color:#c25ce6">{</span><span style="color:#f29ad6">&quot;g_z&quot;</span><span style="color:#c25ce6">:</span> global_obj_first <span style="color:#c25ce6">[</span><span style="color:#3ec23e">2</span><span style="color:#c25ce6">]</span><span style="color:#c25ce6">,</span> <span style="color:#f29ad6">&quot;index&quot;</span><span style="color:#c25ce6">:</span> vertex_ind<span style="color:#c25ce6">}</span><span style="color:#c25ce6">)</span></div>
<div class="ln" style="top:228.95px">221</div>
<div class="cl" style="top:228.95px">        print<span style="color:#c25ce6">(</span><span style="color:#f29ad6">&quot;second&quot;</span><span style="color:#c25ce6">,</span> global_obj_second<span style="color:#c25ce6">.</span>z<span style="color:#c25ce6">)</span></div>
<div class="ln" style="top:244.45px">222</div>
<div class="cl" style="top:244.45px">        global_obj_second_array<span style="color:#c25ce6">.</span>append<span style="color:#c25ce6">(</span><span style="color:#c25ce6">{</span><span style="color:#f29ad6">&quot;g_z&quot;</span><span style="color:#c25ce6">:</span> global_obj_second<span style="color:#c25ce6">.</span>z<span style="color:#c25ce6">,</span> <span style="color:#f29ad6">&quot;index&quot;</span><span style="color:#c25ce6">:</span> vertex_ind<span style="color:#c25ce6">}</span><span style="color:#c25ce6">)</span></div>
<div class="ln" style="top:259.95px">223</div>
<div class="ln" style="top:275.45px">224</div>
<div class="cl" style="top:275.45px">        <span style="color:#4c4cf5">if</span> vertex_ind <span style="color:#c25ce6">=</span><span style="color:#c25ce6">=</span> len<span style="color:#c25ce6">(</span>vert_indexes_first<span style="color:#c25ce6">)</span><span style="color:#c25ce6">-</span><span style="color:#3ec23e">1</span><span style="color:#c25ce6">:</span></div>
<div class="ln" style="top:290.95px">225</div>
<div class="cl" style="top:290.95px">            global_obj_first_array <span style="color:#c25ce6">=</span> sorted<span style="color:#c25ce6">(</span>global_obj_first_array<span style="color:#c25ce6">,</span> key<span style="color:#c25ce6">=</span><span style="color:#4c4cf5">lambda</span> d<span style="color:#c25ce6">:</span> d<span style="color:#c25ce6">[</span><span style="color:#f29ad6">&#x27;g_z&#x27;</span><span style="color:#c25ce6">]</span><span style="color:#c25ce6">)</span></div>
<div class="ln" style="top:306.45px">226</div>
<div class="cl" style="top:306.45px">            global_obj_second_array <span style="color:#c25ce6">=</span> sorted<span style="color:#c25ce6">(</span>global_obj_second_array<span style="color:#c25ce6">,</span> key<span style="color:#c25ce6">=</span><span style="color:#4c4cf5">lambda</span> d<span style="color:#c25ce6">:</span> d<span style="color:#c25ce6">[</span><span style="color:#f29ad6">&#x27;g_z&#x27;</span><span style="color:#c25ce6">]</span><span style="color:#c25ce6">)</span></div>
<div class="ln" style="top:321.95px">227</div>
<div class="ln" style="top:337.45px">228</div>
<div class="cl" style="top:337.45px">            ordered_indexes_first <span style="color:#c25ce6">=</span> <span style="color:#c25ce6">[</span><span style="color:#c25ce6">]</span></div>
<div class="ln" style="top:352.95px">229</div>
<div class="cl" style="top:352.95px">            ordered_indexes_second <span style="color:#c25ce6">=</span> <span style="color:#c25ce6">[</span><span style="color:#c25ce6">]</span></div>
<div class="ln" style="top:368.45px">230</div>
<div class="cl" style="top:368.45px">            <span style="color:#4c4cf5">for</span> index <span style="color:#4c4cf5">in</span> global_obj_first_array<span style="color:#c25ce6">:</span></div>
<div class="ln" style="top:383.95px">231</div>
<div class="cl" style="top:383.95px">                ordered_indexes_first<span style="color:#c25ce6">.</span>append<span style="color:#c25ce6">(</span>index<span style="color:#c25ce6">[</span><span style="color:#f29ad6">&quot;index&quot;</span><span style="color:#c25ce6">]</span><span style="color:#c25ce6">)</span></div>
<div class="ln" style="top:399.45px">232</div>
<div class="ln" style="top:414.95px">233</div>
<div class="cl" style="top:414.95px">            <span style="color:#4c4cf5">for</span> index <span style="color:#4c4cf5">in</span> global_obj_second_array<span style="color:#c25ce6">:</span></div>
<div class="ln" style="top:430.45px">234</div>
<div class="cl" style="top:430.45px">                ordered_indexes_second<span style="color:#c25ce6">.</span>append<span style="color:#c25ce6">(</span>index<span style="color:#c25ce6">[</span><span style="color:#f29ad6">&quot;index&quot;</span><span style="color:#c25ce6">]</span><span style="color:#c25ce6">)</span></div>
<div class="ln" style="top:445.95px">235</div>
<div class="ln" style="top:461.45px">236</div>
<div class="cl" style="top:461.45px">            <span style="color:#4c4cf5">for</span> vertex_ind <span style="color:#4c4cf5">in</span> range<span style="color:#c25ce6">(</span>len<span style="color:#c25ce6">(</span>ordered_indexes_first<span style="color:#c25ce6">)</span><span style="color:#c25ce6">)</span><span style="color:#c25ce6">:</span></div>
<div class="ln" style="top:476.95px">237</div>
<div class="cl" style="top:476.95px">                bmesh<span style="color:#c25ce6">.</span>from_edit_mesh<span style="color:#c25ce6">(</span>obj_mesh<span style="color:#c25ce6">)</span><span style="color:#c25ce6">.</span>edges<span style="color:#c25ce6">.</span>new<span style="color:#c25ce6">(</span><span style="color:#c25ce6">(</span>obj_verts<span style="color:#c25ce6">[</span>ordered_indexes_first<span style="color:#c25ce6">[</span>vertex_ind<span style="color:#c25ce6">]</span><span style="color:#c25ce6">]</span><span style="color:#c25ce6">)</span><span style="color:#c25ce6">)</span></div>
<div class="ln" style="top:492.45px">238</div>
<div class="ln" style="top:507.95px">239</div>
<div class="cl" style="top:507.95px">    <span style="color:#4c4cf5">if</span> <span style="color:#c25ce6">(</span>rotated <span style="color:#c25ce6">=</span><span style="color:#c25ce6">=</span> <span style="color:#3ec23e">True</span><span style="color:#c25ce6">)</span><span style="color:#c25ce6">:</span></div>
<div class="ln" style="top:523.45px">240</div>
<div class="cl" style="top:523.45px">        selectAll<span style="color:#c25ce6">(</span>obj_verts<span style="color:#c25ce6">)</span></div>
<div class="ln" style="top:538.95px">241</div>
<div class="cl" style="top:538.95px">        connected_pattern<span style="color:#c25ce6">.</span>rotation_euler<span style="color:#c25ce6">[</span><span style="color:#3ec23e">0</span><span style="color:#c25ce6">]</span> <span style="color:#c25ce6">=</span> <span style="color:#3ec23e">0</span></div>
<div class="ln" style="top:554.45px">242</div>
<div class="cl" style="top:554.45px">        unSelectAll<span style="color:#c25ce6">(</span>obj_verts<span style="color:#c25ce6">)</span></div>
<div class="ln" style="top:569.95px">243</div>
<div class="cl" style="top:569.95px">        bpy<span style="color:#c25ce6">.</span>ops<span style="color:#c25ce6">.</span>object<span style="color:#c25ce6">.</span>mode_set<span style="color:#c25ce6">(</span>mode<span style="color:#c25ce6">=</span><span style="color:#f29ad6">&#x27;OBJECT&#x27;</span><span style="color:#c25ce6">)</span></div>
<div class="ln" style="top:585.45px">244</div>
<div class="cl" style="top:585.45px">    <span style="color:#4c4cf5">else</span><span style="color:#c25ce6">:</span></div>
<div class="ln" style="top:600.95px">245</div>
<div class="cl" style="top:600.95px">        bpy<span style="color:#c25ce6">.</span>ops<span style="color:#c25ce6">.</span>object<span style="color:#c25ce6">.</span>mode_set<span style="color:#c25ce6">(</span>mode<span style="color:#c25ce6">=</span><span style="color:#f29ad6">&#x27;OBJECT&#x27;</span><span style="color:#c25ce6">)</span></div>
<div class="ln" style="top:616.45px">246</div>
<div class="ln" style="top:631.95px">247</div>
<div class="ln" style="top:647.45px">248</div>
<div class="cl" style="top:647.45px"><span style="color:#e8584e">class</span> SynthReadPattern<span style="color:#c25ce6">(</span>bpy<span style="color:#c25ce6">.</span>types<span style="color:#c25ce6">.</span>Panel<span style="color:#c25ce6">)</span><span style="color:#c25ce6">:</span></div>
</div>
<!-- text editor header -->
<div class="dd" style="left:552px;top:26.8px;width:30px;height:18.6px"></div>
<svg class="p" style="left:552px;top:26px" width="32" height="20">
  <rect x="4.5" y="2.8" width="12.5" height="15" fill="#ececec"/>
  <path d="M5.5 4.5 V17" stroke="#777" stroke-width="1" stroke-dasharray="1 1.3"/>
  <path d="M8 6 H15 M8 8.5 H15 M8 11 H15 M8 13.5 H12.5" stroke="#8a8a8a" stroke-width="1"/>
  <path d="M21.2 9 L24 11.8 L26.8 9" fill="none" stroke="#d8d8d8" stroke-width="1.4"/>
</svg>
<div class="hm" style="left:595px">View</div>
<div class="hm" style="left:637.3px">Text</div>
<div class="hm" style="left:675.3px">Edit</div>
<div class="hm" style="left:709.5px">Select</div>
<div class="hm" style="left:757px">Format</div>
<div class="hm" style="left:810.2px">Templates</div>
<div class="dd" style="left:891.3px;top:27px;width:140px;height:18.3px"></div>
<div class="p" style="left:921px;top:28px;width:110px;height:16.3px;background:#1c1c1c"></div>
<svg class="p" style="left:891px;top:26px" width="32" height="20">
  <rect x="4" y="2.8" width="12.5" height="15" fill="#ececec"/>
  <path d="M5 4.5 V17" stroke="#777" stroke-width="1" stroke-dasharray="1 1.3"/>
  <path d="M7.5 6 H14.5 M7.5 8.5 H14.5 M7.5 11 H14.5 M7.5 13.5 H12" stroke="#8a8a8a" stroke-width="1"/>
  <path d="M21 9 L23.8 11.8 L26.6 9" fill="none" stroke="#d8d8d8" stroke-width="1.4"/>
</svg>
<div class="p" style="left:921px;top:23.5px;width:101px;height:25px;overflow:hidden">
  <div class="a" style="left:7px;top:6.3px;color:#e6e6e6">SynthAddPatternModal</div>
</div>
<div class="p" style="left:1021.7px;top:0;width:2.3px;height:678px;background:#161616"></div>

<div id="con">
  <div class="cg" style="left:7.5px;top:15.5px">bpy.data, bpy.ops, bpy.props, bpy.types, bpy.context, bpy.utils, bgl, blf, mathu</div>
  <div class="cg" style="left:-24.7px;top:44px">from mathutils import *; from math import *</div>
  <div class="cg" style="left:-24.7px;top:57.7px">C = bpy.context, D = bpy.data</div>
  <div class="p" style="left:0;top:0;width:541px;height:24.5px;background:#2a2a2a"></div>
  <div class="p" style="left:-10px;top:3.3px;width:73.7px;height:18px;background:#474747;border-radius:4px"></div>
  <div class="a" style="left:2.5px;top:6.8px;color:#e6e6e6">n Viewer</div>
</div>
<div class="p" style="left:0;top:557px;width:2px;height:121px;background:#111"></div>
<div id="info">
  <div class="a" style="left:2.3px;top:6px;font-family:'Liberation Mono',monospace;font-size:13.2px;letter-spacing:0.08px;color:#d6d6d6">mode_toggle()</div>
  <svg class="p" style="left:514px;top:0" width="12" height="8"><path d="M1.5 1.5 L6 5.5 L10.5 1.5" fill="none" stroke="#bdbdbd" stroke-width="1.4"/></svg>
</div>
</body></html>
